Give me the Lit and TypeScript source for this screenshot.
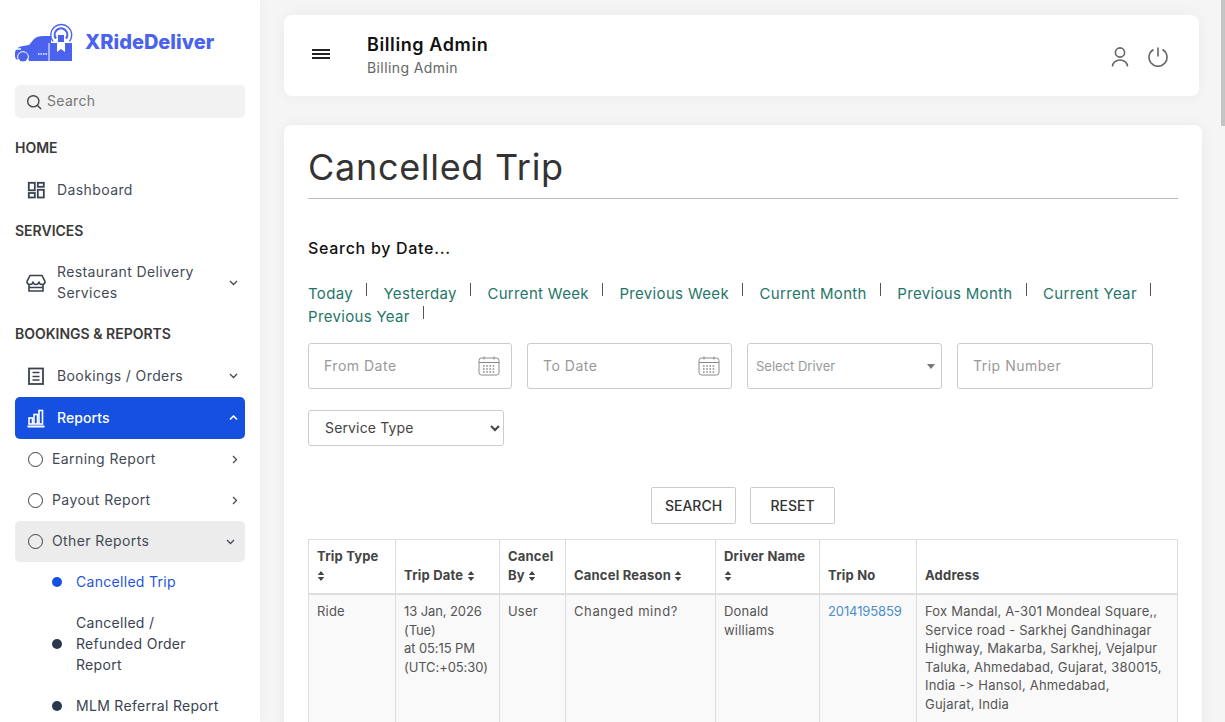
import { LitElement, html, css, svg } from "lit";
import { customElement } from "lit/decorators.js";

const chevDown = svg`<path d="M1 1l3.5 3.5L8 1" fill="none" stroke="currentColor" stroke-width="1.3"/>`;
const chevUp = svg`<path d="M1 4.5L4.5 1 8 4.5" fill="none" stroke="currentColor" stroke-width="1.6"/>`;
const chevRight = svg`<path d="M1 1l3.5 3.5L1 8" fill="none" stroke="currentColor" stroke-width="1.3"/>`;

const calendar = html`<svg class="cal" width="22" height="22" viewBox="0 0 22 22" fill="none" stroke="#8a8a8a" stroke-width="1">
  <rect x="1" y="3" width="20" height="17" rx="2.5" />
  <path d="M1 7.5h20M6 1.5v3M16 1.5v3" />
  <path d="M5 11h12M5 14h12M5 17h12" stroke-width="1.6" stroke-dasharray="1.6 1.6" />
</svg>`;

const sortIcon = html`<svg class="sort" width="8" height="10" viewBox="0 0 8 11" fill="#444"><path d="M4 0l3.6 4.4H.4zM4 11L.4 6.6h7.2z" /></svg>`;

@customElement("app-root")
export class AppRoot extends LitElement {
  static styles = css`
    :host {
      display: flex;
      height: 722px;
      overflow: hidden;
      position: relative;
      background: #f5f5f5;
      font-family: Inter, "Open Sans", sans-serif;
      font-feature-settings: "calt" 0;
      color: #333;
    }
    .side {
      width: 260px;
      flex: none;
      background: #fff;
      padding: 0 15px;
      box-sizing: border-box;
      box-shadow: 0 0 12px rgba(0, 0, 0, 0.04);
    }
    .logo {
      display: flex;
      align-items: center;
      margin-top: 23px;
      height: 40px;
      gap: 12px;
    }
    .logo b {
      font-size: 20px;
      font-weight: 800;
      color: #4a62ee;
      margin-bottom: 2px;
    }
    .search {
      display: flex;
      align-items: center;
      gap: 5px;
      height: 33px;
      margin-top: 22px;
      padding-left: 11px;
      border-radius: 5px;
      background: #f2f2f2;
      color: #777;
      font-size: 14px;
      letter-spacing: 0.3px;
      line-height: 31px;
    }
    .search span {
      margin-bottom: 2px;
    }
    .label {
      font-size: 14px;
      font-weight: 600;
      color: #3a3a3a;
      line-height: 20px;
    }
    .item {
      display: flex;
      align-items: center;
      color: #444a55;
      font-size: 14px;
      letter-spacing: 0.4px;
      line-height: 21px;
      border-radius: 5px;
      position: relative;
    }
    .item .txt {
      flex: 1;
      margin-bottom: 2px;
    }
    .top {
      height: 42px;
      padding: 0 7px 0 10px;
      gap: 10px;
    }
    .top svg.ic {
      width: 22px;
      height: 22px;
      flex: none;
    }
    .active {
      background: #1650e0;
      color: #fff;
      font-weight: 500;
      letter-spacing: 0.1px;
    }
    .sub {
      height: 41px;
      padding: 0 7px 0 13px;
      gap: 9px;
    }
    .ring {
      width: 15px;
      height: 15px;
      box-sizing: border-box;
      border: 1.6px solid #3a3f4a;
      border-radius: 50%;
      flex: none;
    }
    .open {
      background: #ececec;
      padding-right: 10px;
      margin-bottom: -1px;
    }
    .leaf {
      display: flex;
      align-items: center;
      gap: 14px;
      padding: 10px 0 10px 37px;
      font-size: 14px;
      letter-spacing: 0.3px;
      line-height: 21px;
      color: #3a4252;
    }
    .leaf i {
      width: 10px;
      height: 10px;
      border-radius: 50%;
      background: #2b3850;
      flex: none;
    }
    .leaf.on {
      color: #1f55d8;
    }
    .leaf.on i {
      background: #1650e0;
    }
    .main {
      flex: 1;
      min-width: 0;
      padding: 15px 23px 0 24px;
    }
    .bar {
      display: flex;
      align-items: center;
      height: 81px;
      margin-right: 3px;
      background: #fff;
      border-radius: 8px;
      box-shadow: 0 0 16px rgba(0, 0, 0, 0.05);
      padding: 0 30px 0 28px;
    }
    .burger {
      width: 18px;
      height: 10px;
      border-top: 2px solid #222;
      border-bottom: 2px solid #222;
      box-sizing: border-box;
      position: relative;
      margin: 0 37px 3px 0;
    }
    .burger::after {
      content: "";
      position: absolute;
      left: 0;
      right: 0;
      top: 2px;
      height: 2px;
      background: #222;
    }
    .who {
      flex: 1;
      margin-bottom: 2px;
    }
    .who b {
      display: block;
      font-size: 18px;
      font-weight: 600;
      letter-spacing: 0.6px;
      color: #111;
      line-height: 26px;
    }
    .who span {
      font-size: 14px;
      letter-spacing: 0.4px;
      color: #666;
      line-height: 20px;
      display: block;
    }
    .bar svg {
      margin-left: 16px;
    }
    .card {
      margin-top: 29px;
      background: #fff;
      border-radius: 8px;
      padding: 19px 24px 0;
      box-shadow: 0 0 16px rgba(0, 0, 0, 0.05);
      height: 700px;
    }
    h1 {
      margin: 0;
      font-size: 36px;
      font-weight: 400;
      letter-spacing: 0.7px;
      line-height: 47px;
      color: #333;
      padding-bottom: 7px;
      border-bottom: 1px solid #bbb;
    }
    h2 {
      margin: 37px 0 0;
      font-size: 16px;
      font-weight: 500;
      letter-spacing: 0.7px;
      line-height: 24px;
      color: #111;
    }
    .links {
      display: flex;
      flex-wrap: wrap;
      margin-top: 22px;
      font-size: 15px;
      letter-spacing: 0.33px;
      line-height: 23px;
      color: #1f7668;
    }
    .links span {
      margin-right: 16.5px;
      padding-right: 14px;
      position: relative;
    }
    .links span::after {
      content: "";
      position: absolute;
      right: 0;
      top: 1px;
      width: 1px;
      height: 13px;
      background: #555;
    }
    .filters {
      display: flex;
      gap: 15px;
      margin-top: 15px;
    }
    .field {
      display: flex;
      align-items: center;
      justify-content: space-between;
      height: 46px;
      box-sizing: border-box;
      border: 1px solid #ccc;
      border-radius: 3px;
      padding: 0 11px 2px 15px;
      font-size: 14px;
      letter-spacing: 0.5px;
      color: #999;
    }
    .field svg {
      margin-top: 2px;
    }
    .drv {
      font-size: 13px;
      letter-spacing: 0;
      padding: 0 6px 0 8px;
    }
    .drv::after {
      content: "";
      border: 4px solid transparent;
      border-top: 5px solid #777;
      border-bottom: 0;
    }
    .svc {
      display: block;
      width: 196px;
      height: 36px;
      margin-top: 21px;
      padding: 0 12px 2px;
      border: 1px solid #ccc;
      border-radius: 3px;
      background: #fff;
      font: 14px Inter, sans-serif;
      letter-spacing: 0.15px;
      color: #444;
    }
    .btns {
      display: flex;
      justify-content: center;
      gap: 14px;
      margin-top: 41px;
    }
    .btn {
      height: 37px;
      display: flex;
      align-items: center;
      justify-content: center;
      box-sizing: border-box;
      border: 1px solid #ccc;
      border-radius: 2px;
      font-size: 14px;
      font-weight: 500;
      color: #333;
    }
    table {
      margin-top: 15px;
      width: 870px;
      border-collapse: collapse;
      table-layout: fixed;
      font-size: 13px;
      line-height: 18.6px;
      color: #555;
      letter-spacing: 0.2px;
    }
    th,
    td {
      border: 1px solid #ddd;
      padding: 7px 8px;
      text-align: left;
      vertical-align: bottom;
    }
    th {
      font-weight: 700;
      color: #444;
      line-height: 19px;
      border-bottom-width: 2px;
      padding-bottom: 8px;
    }
    td {
      vertical-align: top;
      background: #f9f9f9;
      padding-bottom: 30px;
    }
    td a {
      color: #4a8fc7;
      letter-spacing: -0.1px;
    }
    td.date {
      letter-spacing: -0.1px;
    }
    td.wide {
      letter-spacing: 0.6px;
    }
    .sort {
      vertical-align: -1px;
    }
    .thumb {
      position: absolute;
      right: 0;
      top: 0;
      width: 4px;
      height: 126px;
      background: #c4c4c4;
    }
  `;

  render() {
    return html`
      <aside class="side">
        <div class="logo">
          <svg width="58" height="40" viewBox="0 0 58 40">
            <g fill="#4a62ee">
              <path d="M0 31c0-4 2-7 8-8l6-1 5-6c2-2 5-3 9-3h8v25H14a6 6 0 0 0-11-1l-2-1c-1-1-1-3-1-5z" />
              <circle cx="8" cy="34" r="4.5" />
              <path d="M34 20h23v18H34z" />
            </g>
            <circle cx="8" cy="34" r="5.4" fill="none" stroke="#fff" stroke-width="1" />
            <path d="M1 26h5" stroke="#fff" stroke-width="1.5" />
            <path d="M23 31h9" stroke="#fff" stroke-width="1.6" stroke-dasharray="1.5 1" />
            <path d="M34 20V38" stroke="#fff" stroke-width="1" />
            <g fill="none" stroke="#4a62ee">
              <path d="M38 18.5a10.5 10.5 0 1 1 16.5 0" stroke-width="1.4" />
              <path d="M41 15.5a6.3 6.3 0 1 1 10 0" stroke-width="2.2" />
            </g>
            <path d="M42 12h8v17l-4-3-4 3z" fill="#fff" />
            <path d="M43 12h6v7h-6z" fill="#4a62ee" />
          </svg>
          <b>XRideDeliver</b>
        </div>
        <div class="search">
          <svg width="16" height="16" viewBox="0 0 16 16" fill="none" stroke="#444" stroke-width="1.4">
            <circle cx="7.3" cy="7.3" r="5.6" /><path d="M11.5 11.5L15 15" />
          </svg>
          <span>Search</span>
        </div>
        <div class="label" style="margin-top:20px">HOME</div>
        <div class="item top" style="margin-top:11px">
          <svg class="ic" viewBox="0 0 22 22" fill="none" stroke="#3a4252" stroke-width="1.8">
            <rect x="3.8" y="3.8" width="6" height="7.5" /><rect x="12.8" y="3.8" width="6" height="4" />
            <rect x="3.8" y="14" width="6" height="4.5" /><rect x="12.8" y="10.8" width="6" height="7.7" />
          </svg>
          <span class="txt">Dashboard</span>
        </div>
        <div class="label" style="margin-top:10px">SERVICES</div>
        <div class="item top" style="height:62px;margin-top:11px">
          <svg class="ic" viewBox="0 0 22 22" fill="none" stroke="#3a4252" stroke-width="1.6">
            <path d="M5 3.5h12l3 6a3 3 0 0 1-6 0 3 3 0 0 1-6 0 3 3 0 0 1-6 0z" />
            <path d="M4 12v7h14v-7M4 15.5h14" />
          </svg>
          <span class="txt">Restaurant Delivery Services</span>
          <svg width="9" height="6" viewBox="0 0 9 6">${chevDown}</svg>
        </div>
        <div class="label" style="margin-top:10px">BOOKINGS &amp; REPORTS</div>
        <div class="item top" style="margin-top:11px">
          <svg class="ic" viewBox="0 0 22 22" fill="none" stroke="#3a4252" stroke-width="1.8">
            <rect x="4" y="3.5" width="14" height="15.5" />
            <path d="M7.5 7.5h7M7.5 11.5h7M7.5 15h7" stroke-width="1.5" />
          </svg>
          <span class="txt">Bookings / Orders</span>
          <svg width="9" height="6" viewBox="0 0 9 6">${chevDown}</svg>
        </div>
        <div class="item top active">
          <svg class="ic" viewBox="0 0 22 22" fill="none" stroke="#fff" stroke-width="1.6">
            <rect x="4" y="11" width="3.5" height="6" /><rect x="9" y="7.5" width="3.5" height="9.5" />
            <rect x="14" y="3.5" width="3.5" height="13.5" /><path d="M2.5 19.5h17" stroke-width="2" />
          </svg>
          <span class="txt">Reports</span>
          <svg width="9" height="6" viewBox="0 0 9 6">${chevUp}</svg>
        </div>
        <div class="item sub">
          <span class="ring"></span><span class="txt">Earning Report</span>
          <svg width="6" height="9" viewBox="0 0 6 9">${chevRight}</svg>
        </div>
        <div class="item sub">
          <span class="ring"></span><span class="txt">Payout Report</span>
          <svg width="6" height="9" viewBox="0 0 6 9">${chevRight}</svg>
        </div>
        <div class="item sub open">
          <span class="ring"></span><span class="txt">Other Reports</span>
          <svg width="9" height="6" viewBox="0 0 9 6">${chevDown}</svg>
        </div>
        <div class="leaf on"><i></i><span>Cancelled Trip</span></div>
        <div class="leaf"><i></i><span>Cancelled /<br />Refunded Order<br />Report</span></div>
        <div class="leaf"><i></i><span>MLM Referral Report</span></div>
      </aside>
      <main class="main">
        <header class="bar">
          <div class="burger"></div>
          <div class="who"><b>Billing Admin</b><span>Billing Admin</span></div>
          <svg width="22" height="22" viewBox="0 0 22 22" fill="none" stroke="#666" stroke-width="1.6">
            <circle cx="11" cy="7.5" r="4.6" /><path d="M3.5 21.5a7.5 6.5 0 0 1 15 0" />
          </svg>
          <svg width="22" height="22" viewBox="0 0 22 22" fill="none" stroke="#666" stroke-width="1.6">
            <path d="M11 2.5v9M6.5 4.5a9 9 0 1 0 9 0" />
          </svg>
        </header>
        <section class="card">
          <h1>Cancelled Trip</h1>
          <h2>Search by Date...</h2>
          <div class="links">
            ${["Today", "Yesterday", "Current Week", "Previous Week", "Current Month", "Previous Month", "Current Year", "Previous Year"].map(
              (l) => html`<span>${l}</span>`
            )}
          </div>
          <div class="filters">
            <div class="field" style="width:204px">From Date ${calendar}</div>
            <div class="field" style="width:205px">To Date ${calendar}</div>
            <div class="field drv" style="width:195px">Select Driver</div>
            <div class="field" style="width:196px">Trip Number</div>
          </div>
          <select class="svc"><option>Service Type</option></select>
          <div class="btns">
            <div class="btn" style="width:85px">SEARCH</div>
            <div class="btn" style="width:85px">RESET</div>
          </div>
          <table>
            <colgroup>
              <col style="width:87px" /><col style="width:104px" /><col style="width:66px" /><col style="width:150px" />
              <col style="width:104px" /><col style="width:97px" /><col />
            </colgroup>
            <thead>
              <tr>
                <th>Trip Type<br />${sortIcon}</th>
                <th>Trip Date ${sortIcon}</th>
                <th>Cancel<br />By ${sortIcon}</th>
                <th>Cancel Reason ${sortIcon}</th>
                <th>Driver Name<br />${sortIcon}</th>
                <th>Trip No</th>
                <th>Address</th>
              </tr>
            </thead>
            <tbody>
              <tr>
                <td>Ride</td>
                <td class="date">13 Jan, 2026<br />(Tue)<br />at 05:15 PM<br />(UTC:+05:30)</td>
                <td>User</td>
                <td class="wide">Changed mind?</td>
                <td>Donald williams</td>
                <td><a>2014195859</a></td>
                <td>Fox Mandal, A-301 Mondeal Square,, Service road - Sarkhej Gandhinagar Highway, Makarba, Sarkhej, Vejalpur Taluka, Ahmedabad, Gujarat, 380015, India -&gt; Hansol, Ahmedabad,<br />Gujarat, India</td>
              </tr>
            </tbody>
          </table>
        </section>
      </main>
      <div class="thumb"></div>
    `;
  }
}
